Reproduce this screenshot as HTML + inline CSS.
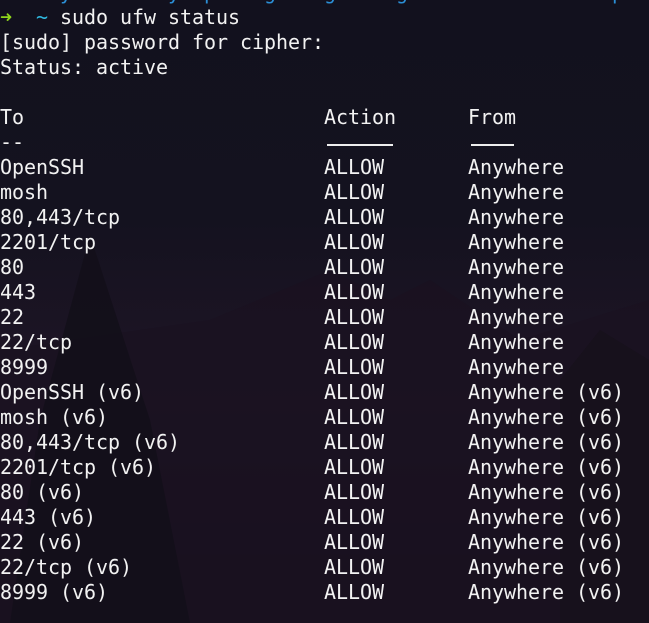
<!DOCTYPE html>
<html><head><meta charset="utf-8"><style>
html,body{margin:0;padding:0;width:649px;height:623px;overflow:hidden}
body{background:linear-gradient(180deg,#12111e 0%,#14121f 35%,#1c1424 55%,#1e1526 65%,#18121f 85%,#141019 100%);position:relative;font-family:"DejaVu Sans Mono","Liberation Mono",monospace;font-size:20px;color:#f2f2f2}
.t{position:absolute;left:0;top:-20px;white-space:pre;line-height:25px;letter-spacing:-0.04px}
.g{color:#8fd61c}.c{color:#2fb8e0}.b{color:#2b8fd6}
.u{position:absolute;height:2px;background:#eee;top:144px}
svg{position:absolute;left:0;top:0}
</style></head><body>
<svg width="649" height="623">
<polygon points="210,320 330,270 390,300 430,280 520,340 649,300 649,623 0,623 0,350" fill="#1a1220" opacity="0.8"/>
<polygon points="90,235 40,420 10,623 190,623 150,420" fill="#130f19" opacity="0.9"/>
<polygon points="560,380 600,330 649,360 649,623 560,623" fill="#17111c"/>
</svg>
<div class="t"><span class="b">  .  y    .   y  p    g    g     g         .       p</span>
<span class="g">➜</span>  <span class="c">~</span> sudo ufw status
[sudo] password for cipher:
Status: active

To                         Action      From
--
OpenSSH                    ALLOW       Anywhere
mosh                       ALLOW       Anywhere
80,443/tcp                 ALLOW       Anywhere
2201/tcp                   ALLOW       Anywhere
80                         ALLOW       Anywhere
443                        ALLOW       Anywhere
22                         ALLOW       Anywhere
22/tcp                     ALLOW       Anywhere
8999                       ALLOW       Anywhere
OpenSSH (v6)               ALLOW       Anywhere (v6)
mosh (v6)                  ALLOW       Anywhere (v6)
80,443/tcp (v6)            ALLOW       Anywhere (v6)
2201/tcp (v6)              ALLOW       Anywhere (v6)
80 (v6)                    ALLOW       Anywhere (v6)
443 (v6)                   ALLOW       Anywhere (v6)
22 (v6)                    ALLOW       Anywhere (v6)
22/tcp (v6)                ALLOW       Anywhere (v6)
8999 (v6)                  ALLOW       Anywhere (v6)</div>
<div class="u" style="left:327px;width:66px"></div>
<div class="u" style="left:471px;width:43px"></div>
</body></html>
